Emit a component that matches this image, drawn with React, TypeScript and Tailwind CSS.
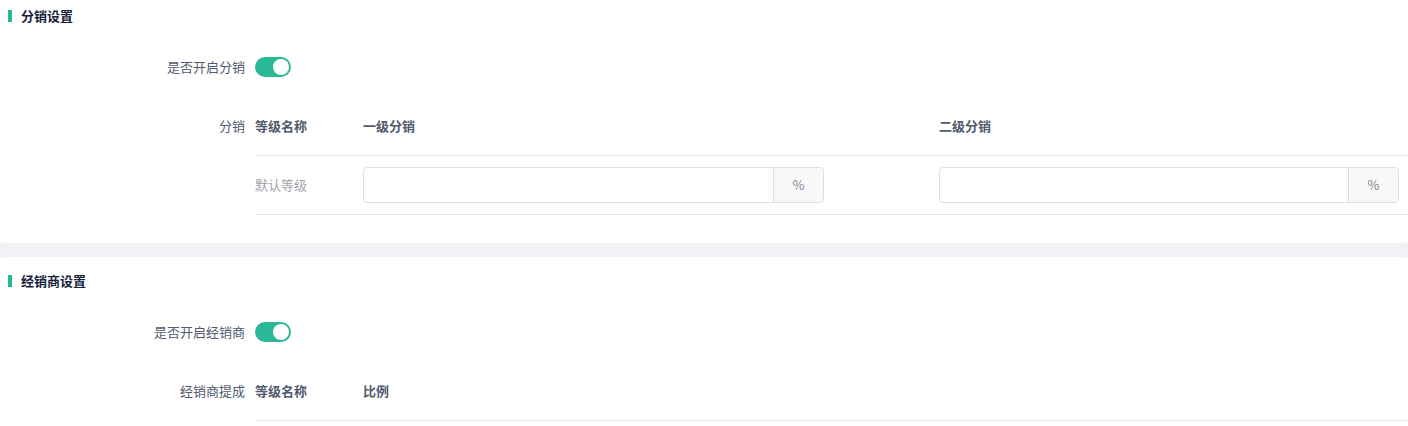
import React from "react";

const font = { fontFamily: '"Noto Sans CJK SC", "Noto Sans", sans-serif' };

function Switch() {
  return (
    <div className="ml-[10px] flex h-[20px] w-[36px] items-center justify-end rounded-full bg-[#2ab996] pr-[2px]">
      <div className="h-[16px] w-[16px] rounded-full bg-white" />
    </div>
  );
}

function Title({ text }: { text: string }) {
  return (
    <div className="flex h-[32px] items-center">
      <div className="ml-[8px] h-[12px] w-[4px] bg-[#2ab996]" />
      <div className="ml-[9px] text-[13px] font-bold text-[#17233d]">{text}</div>
    </div>
  );
}

function PctInput({ w }: { w: string }) {
  return (
    <div className={`flex h-[36px] ${w} rounded-[4px] border border-[#dcdee2] bg-white`}>
      <div className="flex-1" />
      <div className="flex w-[50px] items-center justify-center rounded-r-[4px] border-l border-[#dcdee2] bg-[#f8f8f9] text-[13px] text-[#808695]">
        %
      </div>
    </div>
  );
}

export default function App() {
  return (
    <div className="min-h-[426px] w-[1408px] bg-[#f0f2f5]" style={font}>
      <div className="rounded-b-[4px] bg-white pb-[28px]">
        <Title text="分销设置" />
        <div className="mt-[17px] flex h-[36px] items-center">
          <div className="w-[245px] text-right text-[13px] text-[#515a6e]">是否开启分销</div>
          <Switch />
        </div>
        <div className="mt-[11px] flex">
          <div className="flex h-[60px] w-[245px] items-center justify-end text-[13px] text-[#515a6e]">分销</div>
          <div className="ml-[10px] flex-1">
            <div className="flex h-[60px] items-center border-b border-[#e8eaec] text-[13px] font-bold text-[#515a6e]">
              <div className="w-[108px]">等级名称</div>
              <div className="w-[576px]">一级分销</div>
              <div className="flex-1">二级分销</div>
            </div>
            <div className="flex h-[59px] items-center border-b border-[#e3e6ea]">
              <div className="w-[108px] text-[13px] text-[#a0a4ab]">默认等级</div>
              <div className="w-[576px]">
                <PctInput w="w-[461px]" />
              </div>
              <div className="flex-1">
                <PctInput w="w-[460px]" />
              </div>
            </div>
          </div>
        </div>
      </div>
      <div className="mt-[14px] rounded-t-[4px] bg-white pt-[8px]">
        <Title text="经销商设置" />
        <div className="mt-[17px] flex h-[36px] items-center">
          <div className="w-[245px] text-right text-[13px] text-[#515a6e]">是否开启经销商</div>
          <Switch />
        </div>
        <div className="mt-[11px] flex">
          <div className="flex h-[60px] w-[245px] items-center justify-end text-[13px] text-[#515a6e]">经销商提成</div>
          <div className="ml-[10px] flex-1">
            <div className="flex h-[60px] items-center border-b border-[#e8eaec] text-[13px] font-bold text-[#515a6e]">
              <div className="w-[108px]">等级名称</div>
              <div className="flex-1">比例</div>
            </div>
            <div className="h-[20px]" />
          </div>
        </div>
      </div>
    </div>
  );
}
